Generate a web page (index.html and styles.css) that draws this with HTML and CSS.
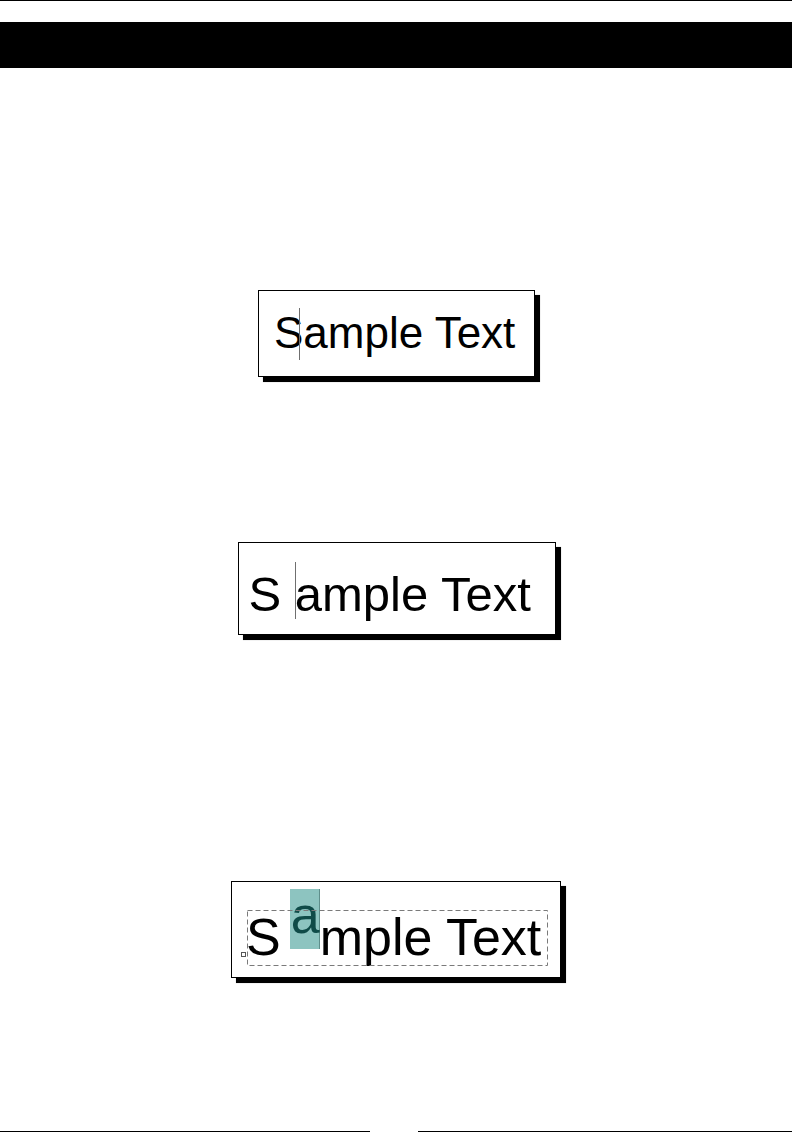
FILE: index.html
```html
<!DOCTYPE html>
<html>
<head>
<meta charset="utf-8">
<link rel="stylesheet" href="styles.css">
</head>
<body>
<div class="page">
  <div class="topline"></div>
  <div class="band"></div>

  <div class="figure fig1">
    <div class="box box1"><span class="line">S<span class="caret caret1"></span>ample Text</span></div>
  </div>

  <div class="figure fig2">
    <div class="box box2"><span class="line">S <span class="caret caret2"></span>ample Text</span></div>
  </div>

  <div class="figure fig3">
    <div class="box box3">
      <span class="line">S<span class="hl">a</span>mple Text</span>
      <svg class="selection" width="302" height="57" viewBox="0 0 302 57">
        <rect x="0.5" y="0.5" width="300" height="55" fill="none" stroke="#7a7a7a" stroke-width="1" stroke-dasharray="5 3"/>
      </svg>
      <span class="handle"></span>
    </div>
  </div>

  <div class="footer">
    <div class="fline left"></div>
    <div class="fline right"></div>
  </div>
</div>
</body>
</html>
```

FILE: styles.css
```css
html, body {
  margin: 0;
  padding: 0;
  background: #fff;
}

.page {
  width: 792px;
  height: 1142px;
  font-family: "Liberation Sans", Arial, sans-serif;
  color: #000;
}

.topline {
  height: 1px;
  background: #000;
}

.band {
  margin-top: 21px;
  height: 46px;
  background: #000;
}

.figure {
  display: flex;
  justify-content: center;
}

.fig1 { margin-top: 222px; padding-left: 1px; }
.fig2 { margin-top: 165px; padding-left: 1px; }
.fig3 { margin-top: 246px; }

.box {
  box-sizing: border-box;
  border: 1px solid #000;
  background: #fff;
  box-shadow: 5px 5px 0.6px #000;
  white-space: nowrap;
  position: relative;
}

.line {
  line-height: 1;
  display: block;
}

.box1 {
  width: 277px;
  height: 87px;
  padding: 20px 0 0 15px;
  font-size: 44px;
}

.box2 {
  width: 318px;
  height: 93px;
  padding: 27px 0 0 10px;
  font-size: 49px;
}

.box3 {
  width: 330px;
  height: 97px;
  padding: 7px 0 0 14px;
  font-size: 52px;
}

.caret {
  position: relative;
  display: inline;
}

.caret::after {
  content: "";
  position: absolute;
  width: 1px;
  background: #6f6f6f;
}

.caret1::after {
  left: -4px;
  top: 0;
  height: 52px;
}

.caret2::after {
  left: 0;
  top: -5px;
  height: 57px;
}

.hl {
  display: inline-block;
  box-sizing: border-box;
  width: 30px;
  height: 60px;
  margin-left: 9px;
  padding-left: 1px;
  background: #8dc4c0;
  border-right: 1px solid #5e8e8b;
  color: #0f4b48;
  vertical-align: 22px;
  line-height: 1;
}

.selection {
  position: absolute;
  left: 15px;
  top: 28px;
}

.handle {
  position: absolute;
  left: 9px;
  top: 70px;
  width: 3px;
  height: 3px;
  border: 1px solid #555;
  background: #fff;
}

.footer {
  margin-top: 153px;
  display: flex;
  gap: 48px;
}

.fline {
  height: 1px;
  background: #000;
}

.fline.left { width: 370px; }
.fline.right { flex: 1; }
```
